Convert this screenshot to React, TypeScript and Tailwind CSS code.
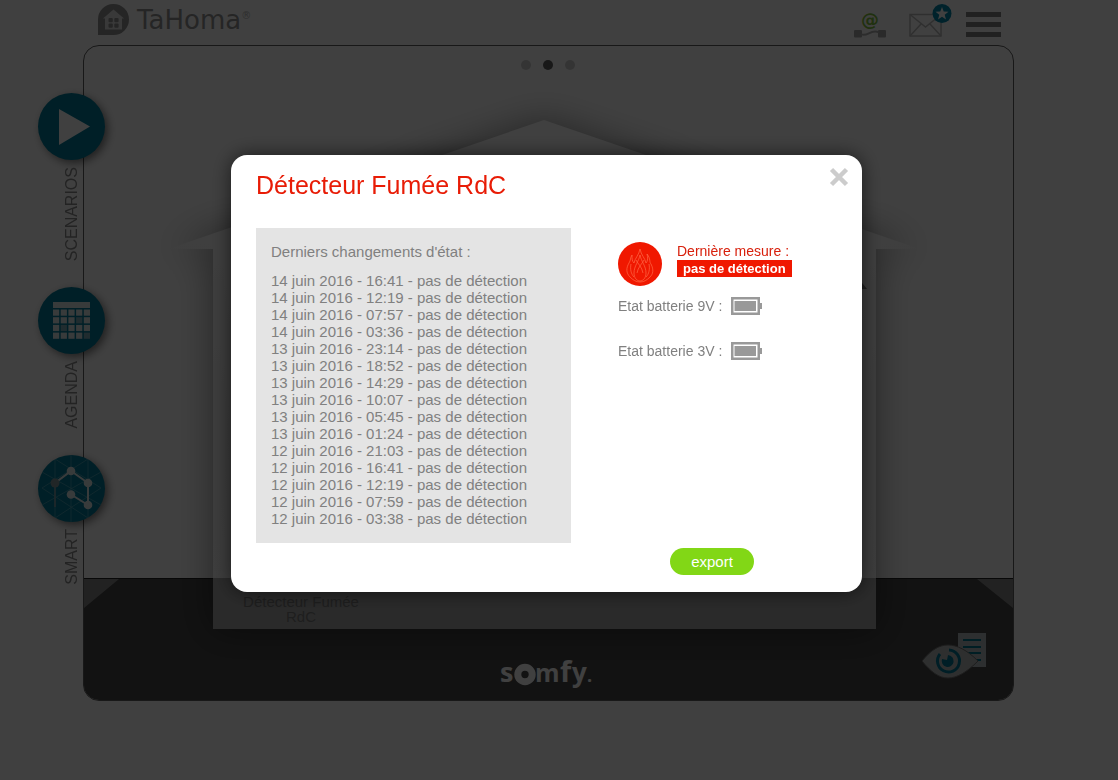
import { useState } from "react";
import type { ReactNode } from "react";

const DETECTIONS = [
  "14 juin 2016 - 16:41",
  "14 juin 2016 - 12:19",
  "14 juin 2016 - 07:57",
  "14 juin 2016 - 03:36",
  "13 juin 2016 - 23:14",
  "13 juin 2016 - 18:52",
  "13 juin 2016 - 14:29",
  "13 juin 2016 - 10:07",
  "13 juin 2016 - 05:45",
  "13 juin 2016 - 01:24",
  "12 juin 2016 - 21:03",
  "12 juin 2016 - 16:41",
  "12 juin 2016 - 12:19",
  "12 juin 2016 - 07:59",
  "12 juin 2016 - 03:38",
];

export default function App() {
  const [open, setOpen] = useState(true);

  return (
    <div className="flex min-h-screen flex-col bg-white pb-[79px] font-['Liberation_Sans',Arial,sans-serif]">
      <TopBar />
      <main className="flex flex-1 pr-[104px] pl-[38px]">
        <SideNav />
        <HousePanel />
      </main>
      {open && <DetectorDialog onClose={() => setOpen(false)} />}
    </div>
  );
}

function TopBar() {
  return (
    <header className="flex h-[45px] items-start justify-between pr-[117px] pl-[97px]">
      <a href="#" className="flex items-start gap-2 text-[#949494]">
        <svg viewBox="0 0 32 32" className="mt-1 h-8 w-8" aria-hidden="true">
          <path d="M1 31V16A15.5 15.5 0 1 1 16.500 31Z" fill="currentColor" />
          <path d="M16.500 5.500 27 14.500H25V25.500H8V14.500H6Z" fill="#e4e4e4" />
          <g fill="currentColor">
            <rect x="11.500" y="14" width="4.300" height="4.300" rx="1" />
            <rect x="17.300" y="14" width="4.300" height="4.300" rx="1" />
            <rect x="11.500" y="19.500" width="4.300" height="4.300" rx="1" />
            <rect x="17.300" y="19.500" width="4.300" height="4.300" rx="1" />
          </g>
        </svg>
        <span className="flex pt-1 font-['DejaVu_Sans',Verdana,sans-serif] text-[26px] leading-8">
          TaHoma
          <sup className="top-0 pt-1 text-[10px] leading-4 text-[#b8b8b8]">®</sup>
        </span>
      </a>
      <div className="flex items-start">
        <button type="button" aria-label="Connexion" className="mt-2 mr-[21px]">
          <svg viewBox="0 0 34 32" className="h-8 w-[34px]" aria-hidden="true">
            <text
              x="17"
              y="18"
              textAnchor="middle"
              fontSize="18"
              fontWeight="bold"
              fill="#7fc23c"
              fontFamily="DejaVu Sans, sans-serif"
            >
              @
            </text>
            <rect x="1" y="22" width="8" height="7.500" rx="1" fill="#a8a8a8" />
            <rect x="25" y="22" width="8" height="7.500" rx="1" fill="#a8a8a8" />
            <path d="M8 26C14 30 18 20 26 24.500" stroke="#b0b0b0" strokeWidth="2" fill="none" />
          </svg>
        </button>
        <button type="button" aria-label="Messages" className="mt-1 mr-[14px]">
          <svg viewBox="0 0 44 34" className="h-[34px] w-11" aria-hidden="true">
            <g stroke="#bcbcbc" strokeWidth="1.500" fill="none">
              <rect x="2" y="10.500" width="31" height="21.500" />
              <path d="M2 10.500 17.500 23 33 10.500M2 32 13 20M33 32 22 20" />
            </g>
            <circle cx="34" cy="9.500" r="9.500" fill="#0088ad" />
            <path
              d="m34 3 1.700 4.600 4.800.2-3.800 3 1.300 4.700-4-2.700-4 2.700 1.300-4.700-3.800-3 4.800-.2Z"
              fill="#fff"
            />
          </svg>
        </button>
        <button type="button" aria-label="Menu" className="mt-3 flex flex-col gap-[5px]">
          <span className="h-[5px] w-[35px] bg-[#848484]" />
          <span className="h-[5px] w-[35px] bg-[#848484]" />
          <span className="h-[5px] w-[35px] bg-[#848484]" />
        </button>
      </div>
    </header>
  );
}

function SideNav() {
  return (
    <nav className="z-10 -mr-[22px] flex w-[67px] flex-col gap-[26px] pt-12">
      <NavItem label="SCENARIOS">
        <path d="M21 16 52 33.500 21 52Z" fill="#fff" />
      </NavItem>
      <NavItem label="AGENDA">
        <rect x="15" y="15" width="37" height="6" fill="#dfe9ec" />
        {[0, 1, 2, 3].map((row) =>
          [0, 1, 2, 3, 4].map((col) => (
            <rect
              key={`${row}-${col}`}
              x={15 + col * 7.7}
              y={22.5 + row * 7.7}
              width="6.200"
              height="6.200"
              fill={[8, 11, 19].includes(row * 5 + col) ? "#7fb0bd" : "#dfe9ec"}
            />
          )),
        )}
      </NavItem>
      <NavItem label="SMART">
        <path
          d="M33 0V67M4 17 63 50M4 50 63 17M17 4 63 33M17 63 63 33M4 33 50 4M4 33 50 63M17 4V63M50 4V63"
          stroke="#4fa5ba"
          strokeWidth=".8"
          fill="none"
        />
        <path d="M17 52V28L33 16" stroke="#6d99a5" strokeWidth="2" fill="none" />
        <path d="M17 28 33 16 50 28V50L33 39.500" stroke="#dfe9ec" strokeWidth="2" fill="none" />
        <circle cx="17" cy="28" r="4.500" fill="#85979c" />
        <g fill="#dfe9ec">
          <circle cx="33" cy="16" r="4.300" />
          <circle cx="50" cy="28" r="4.300" />
          <circle cx="50" cy="50" r="4.300" />
          <circle cx="33" cy="39.500" r="4.300" />
        </g>
      </NavItem>
    </nav>
  );
}

function NavItem({ label, children }: { label: string; children: ReactNode }) {
  return (
    <a href="#" className="flex flex-col items-center gap-[7px] text-base leading-[22px] text-[#8c8c8c]">
      <svg
        viewBox="0 0 67 67"
        className="h-[67px] w-[67px] rounded-full bg-[#007c9a] shadow-[3px_3px_8px_rgba(0,0,0,0.5)]"
        aria-hidden="true"
      >
        {children}
      </svg>
      <span className="rotate-180 [writing-mode:vertical-rl]">{label}</span>
    </a>
  );
}

function HousePanel() {
  return (
    <section className="relative flex flex-1 flex-col overflow-hidden rounded-2xl border border-[#606060]">
      <div className="flex flex-1 items-start justify-center gap-3 pt-[14px] pr-0.5">
        <span className="h-2.5 w-2.5 rounded-full bg-[#d0d0d0]" />
        <span className="h-2.5 w-2.5 rounded-full bg-[#606060]" />
        <span className="h-2.5 w-2.5 rounded-full bg-[#d0d0d0]" />
      </div>
      <footer className="flex h-[122px] flex-col border-t border-[#202020] bg-[#484848]">
        <p className="z-10 mt-[15px] ml-[157px] w-[120px] text-center text-[15px] leading-[15px] text-[#787878]">
          Détecteur Fumée RdC
        </p>
        <div className="z-10 grid flex-1 grid-cols-3 px-[27px]">
          <SomfyLogo />
          <button type="button" aria-label="Vue détaillée" className="col-start-3 mt-2 self-start justify-self-end">
            <svg viewBox="0 0 64 47" className="h-[47px] w-16" aria-hidden="true">
              <path d="M36 1H64V35H36Z" fill="#b4bcbe" />
              <path d="M41 8H59M41 15H59M41 21H59M41 28H59" stroke="#007a90" strokeWidth="2" />
              <path
                d="M0 29C9 18 17 13 26 13S45 18 56 29C45 40 35 46 26 46S9 40 0 29Z"
                fill="#b8bcbd"
                stroke="#747474"
              />
              <path d="M27 18A11 11 0 1 1 18 22" stroke="#007a96" strokeWidth="3" fill="none" />
              <path d="M26 23A6 6 0 1 1 20 27L25 28Z" fill="#007a96" />
            </svg>
          </button>
        </div>
      </footer>
      <HouseBackdrop />
    </section>
  );
}

function SomfyLogo() {
  return (
    <svg
      viewBox="0 0 104 48"
      className="col-start-2 mt-[22px] h-12 w-[104px] justify-self-center"
      role="img"
      aria-label="somfy"
    >
      <g fill="#fff" fontFamily="Open Sans, sans-serif" fontWeight="bold" fontSize="27">
        <text x="4" y="36">s</text>
        <text x="39" y="36" fontSize="25">m</text>
        <text x="64" y="36" fontSize="29">f</text>
        <text x="76" y="36" fontSize="26">y</text>
        <text x="91" y="36" fontSize="18">.</text>
      </g>
      <circle cx="29" cy="28.500" r="7.200" fill="none" stroke="#fff" strokeWidth="7" />
    </svg>
  );
}

/* House outline with its soft shadow, tinted where it overlaps the dark footer. */
function HouseBackdrop() {
  const outline = "M544 120 920 249H876V629H213V249H168Z";
  return (
    <svg
      viewBox="83 45 931 656"
      preserveAspectRatio="xMidYMax meet"
      className="pointer-events-none absolute -inset-px h-[calc(100%+2px)] w-[calc(100%+2px)]"
      aria-hidden="true"
    >
      <defs>
        <filter id="house-shadow" x="-20%" y="-20%" width="140%" height="140%">
          <feGaussianBlur stdDeviation="18" />
        </filter>
        <linearGradient id="house-fill" gradientUnits="userSpaceOnUse" x1="0" y1="120" x2="0" y2="629">
          <stop offset="0" stopColor="#fff" />
          <stop offset=".6" stopColor="#f0f0f0" />
          <stop offset=".9" stopColor="#f4f4f4" />
          <stop offset=".9" stopColor="#a8a8a8" />
          <stop offset="1" stopColor="#a8a8a8" />
        </linearGradient>
      </defs>
      <path d="M84 579H119L84 608ZM1013 579H977L1013 608Z" fill="#888" />
      <path d={outline} fill="#000" opacity=".42" filter="url(#house-shadow)" />
      <path d={outline} fill="url(#house-fill)" />
      <path d="M858 278 867 289H858Z" fill="#808080" />
    </svg>
  );
}

function DetectorDialog({ onClose }: { onClose: () => void }) {
  return (
    <div className="fixed inset-0 z-20 flex items-start justify-center bg-black/75 pt-[155px] pr-[25px]">
      <div
        role="dialog"
        aria-modal="true"
        aria-labelledby="dialog-title"
        className="w-[631px] max-w-full rounded-2xl bg-white px-[25px] pb-[17px] text-[#808080] shadow-[0_0_20px_rgba(0,0,0,0.6)]"
      >
        <div className="flex items-start justify-between pt-3">
          <h1 id="dialog-title" className="text-[25px] leading-9 text-[#e81c06]">
            Détecteur Fumée RdC
          </h1>
          <button type="button" aria-label="Fermer" onClick={onClose} className="-mr-3">
            <svg viewBox="0 0 20 20" className="h-5 w-5" aria-hidden="true">
              <path d="M2.500 2.500 17.500 17.500M17.500 2.500 2.500 17.500" stroke="#ccc" strokeWidth="4.500" />
            </svg>
          </button>
        </div>

        <div className="mt-[25px] flex gap-[47px]">
          <section className="w-[315px] bg-[#e4e4e4] px-[15px] pt-[15px] pb-4 text-[15px] leading-[17px]">
            <h2 className="mb-3">Derniers changements d'état :</h2>
            <ul>
              {DETECTIONS.map((date) => (
                <li key={date}>{date} - pas de détection</li>
              ))}
            </ul>
          </section>

          <section className="pt-[14px] text-sm leading-[17px]">
            <div className="flex gap-[15px]">
              <FlameIcon />
              <div className="pt-px">
                <p className="text-[#d8200c]">Dernière mesure :</p>
                <p className="bg-[#f01800] px-1.5 text-[13px] leading-[17px] font-bold text-white">
                  pas de détection
                </p>
              </div>
            </div>
            <BatteryRow label="Etat batterie 9V :" />
            <BatteryRow label="Etat batterie 3V :" />
          </section>
        </div>

        <div className="mt-[5px] flex justify-end pr-[83px]">
          <button
            type="button"
            className="h-[27px] w-[84px] rounded-full bg-[#82d716] text-[15px] leading-[27px] text-white"
          >
            export
          </button>
        </div>
      </div>
    </div>
  );
}

function FlameIcon() {
  return (
    <svg viewBox="0 0 44 44" className="h-11 w-11" aria-hidden="true">
      <circle cx="22" cy="22" r="22" fill="#f01800" />
      <g fill="none" stroke="#ff6a48" strokeWidth=".7">
        <path d="M22 7C23 13 27 16 28 21C30 19 30 15 29 12C33 17 31 20 33 22C36 28 35 32 32 35C29 38 26 40 22 40S15 38 12 35C8 31 8 26 11 21C13 18 12 16 14 13C14 17 14 19 16 21C17 16 21 13 22 7Z" />
        <path d="M22 13C23 19 28 24 28 31C28 36 25 39 22 39S16 36 16 31C16 24 21 19 22 13Z" />
        <path d="M18 18C20 22 24 25 25 31M26 18C24 22 20 25 19 31M13 22C12 27 13 32 16 35M31 22C32 27 31 32 28 35" />
      </g>
    </svg>
  );
}

function BatteryRow({ label }: { label: string }) {
  return (
    <div className="mt-2.5 mb-[25px] flex h-5 items-center gap-[9px]">
      <span>{label}</span>
      <svg viewBox="0 0 32 18" className="h-[18px] w-8" aria-hidden="true">
        <path d="M0 0H29V6H31V12H29V18H0ZM2.500 2.500V15.500H26.500V2.500Z" fill="#999" fillRule="evenodd" />
        <rect x="3.500" y="4" width="21.500" height="10" fill="#999" />
      </svg>
    </div>
  );
}
